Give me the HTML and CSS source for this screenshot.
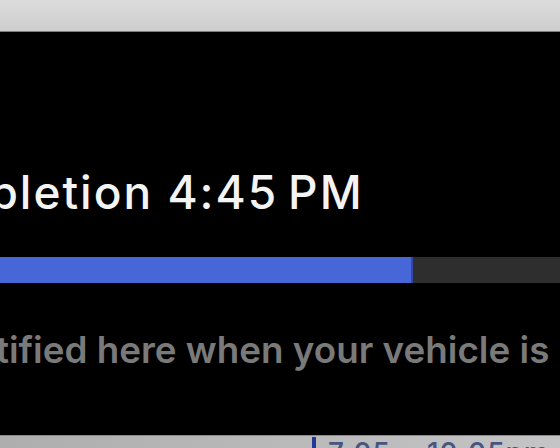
FILE: index.html
```html
<!DOCTYPE html>
<html lang="en">
<head>
    <meta charset="UTF-8">
    <title>Charging</title>
    <link rel="stylesheet" href="styles.css">
</head>
<body>
    <div class="window-bar"></div>
    <div class="panel">
        <h1 class="panel-title">Completion 4:45&#8201;PM</h1>
        <div class="progress">
            <div class="progress-fill" style="width: 73.8%"></div>
        </div>
        <p class="panel-note">You'll be notified here when your vehicle is ready.</p>
    </div>
    <div class="schedule-strip">
        <div class="schedule-marker"></div>
        <span class="schedule-time">7:05</span>
        <span class="schedule-time">10:05pm</span>
    </div>
</body>
</html>
```

FILE: styles.css
```css
/* Charging panel */
html, body {
    margin: 0;
    height: 100%;
}
body {
    display: flex;
    flex-direction: column;
    height: 448px;
    overflow: hidden;
    background: #000;
    font-family: Inter, "Noto Sans", sans-serif;
}
.window-bar {
    height: 31px;
    flex-shrink: 0;
    background: linear-gradient(#dcdcdc, #cdcdcd);
    border-bottom: 1px solid #7c7c7c;
}
.panel {
    flex: 1;
    padding-top: 133px;
    overflow: hidden;
}
.panel-title {
    margin: 0 0 38px -119px;
    font-size: 46px;
    line-height: 54px;
    font-weight: 500;
    color: #f4f4f4;
    white-space: nowrap;
    letter-spacing: 2px;
}
.progress {
    height: 26px;
    background: #2e2e2e;
    box-sizing: border-box;
}
.progress-fill {
    height: 100%;
    background: #4767d8;
    border-right: 2px solid #3447a8;
    box-sizing: border-box;
}
.panel-note {
    margin: 44px 0 0 -211px;
    font-size: 36.8px;
    line-height: 46px;
    font-weight: 600;
    color: #7a7a7a;
    white-space: nowrap;
}
.schedule-strip {
    height: 12px;
    flex-shrink: 0;
    display: flex;
    align-items: flex-start;
    gap: 12px;
    padding-left: 312px;
    background: linear-gradient(90deg, #aeaeae, #c4c4c6);
    border-top: 1px solid #8a8a8a;
    overflow: hidden;
}
.schedule-marker {
    width: 4px;
    height: 12px;
    margin-top: 1px;
    background: #26379a;
}
.schedule-time {
    margin-top: 3px;
    font-size: 28px;
    line-height: 28px;
    font-weight: 500;
    color: #48557e;
    letter-spacing: 1px;
}
.schedule-time + .schedule-time {
    margin-left: 24px;
}
```
